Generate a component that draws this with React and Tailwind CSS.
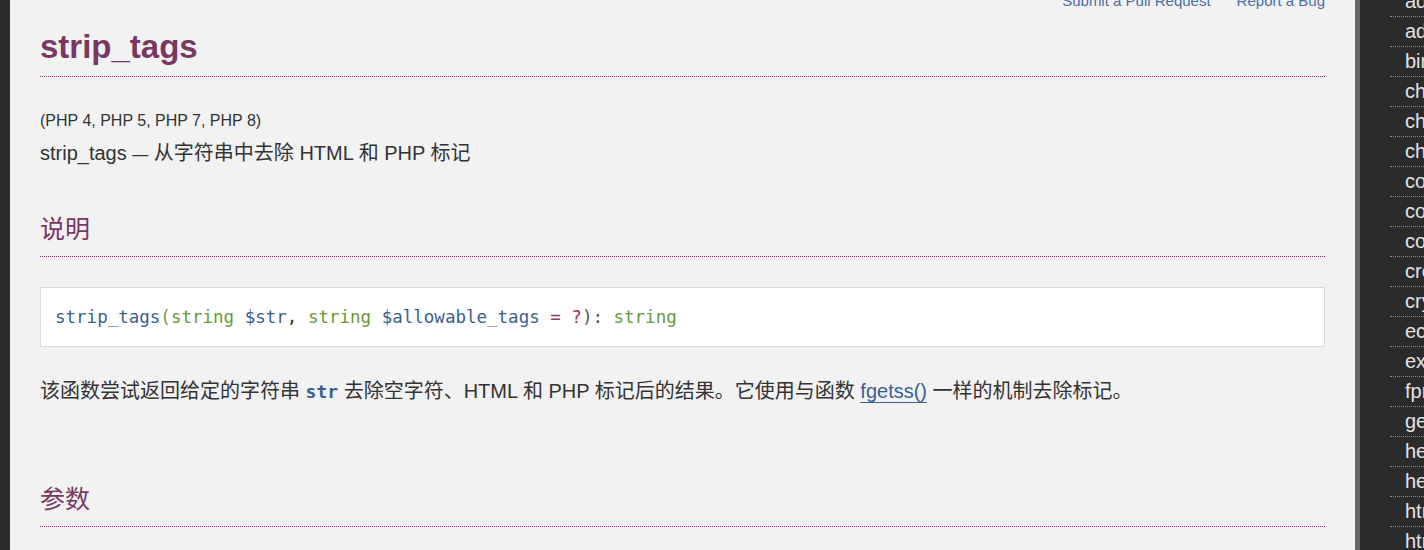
export default function App() {
  const side = [
    "addcslashes",
    "addslashes",
    "bin2hex",
    "chop",
    "chr",
    "chunk_split",
    "convert_uudecode",
    "convert_uuencode",
    "count_chars",
    "crc32",
    "crypt",
    "echo",
    "explode",
    "fprintf",
    "get_html_translation_table",
    "hebrev",
    "hex2bin",
    "html_entity_decode",
    "htmlentities",
    "htmlspecialchars",
  ];
  return (
    <div className="flex w-[1424px] h-[550px] overflow-hidden bg-[#2b2b2b] font-['Liberation_Sans','Noto_Sans_CJK_SC',sans-serif] text-[#333]">
      <div className="w-[10px] shrink-0 bg-[#2b2b2b]" />
      <main className="w-[1345px] shrink-0 bg-[#f2f2f2] pl-[30px] pr-[30px] overflow-hidden">
        <div className="-mt-[9px] flex justify-end gap-[26px] text-[15px] leading-[20px] text-[#4a6fa3]">
          <span>Submit a Pull Request</span>
          <span>Report a Bug</span>
        </div>
        <h1 className="mt-[16px] pb-[9px] border-b border-dotted border-[#8b2a6f] text-[33px] leading-[40px] font-bold text-[#793862]">
          strip_tags
        </h1>
        <p className="mt-[32px] text-[16px] leading-[24px]">(PHP 4, PHP 5, PHP 7, PHP 8)</p>
        <p className="mt-[5px] h-[30px] text-[20px] leading-[30px]">
          strip_tags <span className="text-[16px] leading-none">—</span> 从字符串中去除 HTML 和 PHP 标记
        </p>
        <h2 className="mt-[41px] pb-[11px] border-b border-dotted border-[#8b2a6f] text-[25px] leading-[36px] font-normal text-[#793862] font-['Noto_Sans_CJK_SC',sans-serif]">
          说明
        </h2>
        <div className="mt-[30px] h-[60px] flex items-center px-[14px] bg-white border border-[#d9d9d9] font-['DejaVu_Sans_Mono',monospace] text-[17.5px] leading-[24px] whitespace-pre">
          <span className="text-[#3a5f92]">strip_tags</span>
          <span className="text-[#6a9a3a]">(</span>
          <span className="text-[#6a9a3a]">string</span>
          <span> </span>
          <span className="text-[#3a5f92]">$str</span>
          <span className="text-[#333]">, </span>
          <span className="text-[#6a9a3a]">string</span>
          <span> </span>
          <span className="text-[#3a5f92]">$allowable_tags</span>
          <span className="text-[#8a3a6a]"> = </span>
          <span className="text-[#993355]">?</span>
          <span className="text-[#555]">): </span>
          <span className="text-[#6a9a3a]">string</span>
        </div>
        <p className="mt-[29px] text-[20px] leading-[30px]">
          该函数尝试返回给定的字符串{" "}
          <code className="font-['DejaVu_Sans_Mono',monospace] font-bold text-[18px] text-[#3a5f92]">str</code>{" "}
          去除空字符、HTML 和 PHP 标记后的结果。它使用与函数{" "}
          <a className="text-[#3a5f92] underline underline-offset-[4px] decoration-1">fgetss()</a>{" "}
          一样的机制去除标记。
        </p>
        <h2 className="mt-[72px] pb-[11px] border-b border-dotted border-[#8b2a6f] text-[25px] leading-[36px] font-normal text-[#793862] font-['Noto_Sans_CJK_SC',sans-serif]">
          参数
        </h2>
      </main>
      <div className="w-[5px] shrink-0 bg-[#686868]" />
      <aside className="w-[64px] shrink-0 bg-[#2b2b2b] overflow-hidden">
        <ul className="-mt-[13px] pl-[30px]">
          {side.map((s, i) => (
            <li
              key={i}
              className="border-b border-dotted border-[#8a8a8a] pl-[15px] h-[30px] leading-[29px] text-[20px] text-[#e2e2e2] whitespace-nowrap overflow-hidden"
            >
              {s}
            </li>
          ))}
        </ul>
      </aside>
    </div>
  );
}
